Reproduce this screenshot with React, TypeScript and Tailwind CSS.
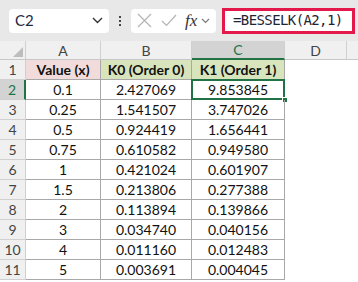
import React from "react";

const rows: [string, string, string][] = [
  ["0.1", "2.427069", "9.853845"],
  ["0.25", "1.541507", "3.747026"],
  ["0.5", "0.924419", "1.656441"],
  ["0.75", "0.610582", "0.949580"],
  ["1", "0.421024", "0.601907"],
  ["1.5", "0.213806", "0.277388"],
  ["2", "0.113894", "0.139866"],
  ["3", "0.034740", "0.040156"],
  ["4", "0.011160", "0.012483"],
  ["5", "0.003691", "0.004045"],
];

const font = { fontFamily: "Lato, 'Open Sans', sans-serif" };

export default function App() {
  return (
    <div className="w-[358px] h-[282px] overflow-hidden bg-white text-[#222]" style={font}>
      {/* toolbar */}
      <div className="h-[41px] bg-[#e8e8e8] flex items-center relative">
        <div className="ml-[9px] w-[100px] h-[24px] rounded-[4px] bg-white flex items-center justify-between pl-[6px] pr-[6px]">
          <span className="text-[15px] text-[#1f2a44]">C2</span>
          <svg width="11" height="7" viewBox="0 0 11 7"><path d="M1 1l4.5 4.5L10 1" fill="none" stroke="#333" strokeWidth="1.4" /></svg>
        </div>
        <div className="w-[22px] flex flex-col items-center gap-[2px]">
          <div className="w-[2px] h-[2px] bg-[#444]" />
          <div className="w-[2px] h-[2px] bg-[#444]" />
          <div className="w-[2px] h-[2px] bg-[#444]" />
        </div>
        <div className="w-[85px] h-[24px] rounded-[4px] bg-white flex items-center pl-[6px]">
          <svg width="15" height="15" viewBox="0 0 15 15"><path d="M1 1l13 13M14 1L1 14" stroke="#b4b4b4" strokeWidth="1.2" fill="none" /></svg>
          <svg className="ml-[9px]" width="16" height="13" viewBox="0 0 16 13"><path d="M1 7l4.5 4.5L15 1" stroke="#b4b4b4" strokeWidth="1.2" fill="none" /></svg>
          <span className="ml-[8px] text-[17px] italic text-[#333] leading-none" style={{ fontFamily: "'Liberation Serif', serif" }}>fx</span>
          <svg className="ml-[4px]" width="9" height="6" viewBox="0 0 9 6"><path d="M1 1l3.5 3.5L8 1" fill="none" stroke="#777" strokeWidth="1.1" /></svg>
        </div>
        <div className="ml-[6px] w-[133px] h-[26px] border-[3px] border-[#e3194b] bg-white flex items-center pl-[8px]">
          <span className="text-[14px] tracking-[-0.6px] text-[#1e2433]" style={{ fontFamily: "'DejaVu Sans Mono', monospace" }}>=BESSELK(A2,1)</span>
        </div>
      </div>
      {/* header row */}
      <div className="flex h-[19px] bg-[#f0f0f0] text-[14px] text-[#444]">
        <div className="w-[26px] border-r border-[#d0d0d0] border-b border-b-[#c8c8c8] relative">
          <svg className="absolute right-[2px] bottom-[2px]" width="10" height="10" viewBox="0 0 10 10"><path d="M10 0V10H0Z" fill="#bdbdbd" /></svg>
        </div>
        <div className="w-[75px] border-r border-[#d0d0d0] border-b border-b-[#c8c8c8] flex items-center justify-center">A</div>
        <div className="w-[91px] border-r border-[#d0d0d0] border-b border-b-[#c8c8c8] flex items-center justify-center">B</div>
        <div className="w-[93px] border-r border-[#d0d0d0] bg-[#d3d3d3] border-b-2 border-b-[#217346] text-[#217346] flex items-center justify-center">C</div>
        <div className="w-[62px] border-r border-[#d0d0d0] border-b border-b-[#c8c8c8] flex items-center justify-center">D</div>
        <div className="flex-1 border-b border-b-[#c8c8c8]" />
      </div>
      {/* row 1 */}
      <div className="flex h-[20px] text-[14px]">
        <div className="w-[26px] bg-[#f0f0f0] border-r border-b border-[#d0d0d0] flex items-center justify-center text-[#444]">1</div>
        <div className="w-[75px] bg-[#f2dcdb] border-r border-b border-[#a8a8a8] flex items-center justify-center font-bold text-[#111]">Value (x)</div>
        <div className="w-[91px] bg-[#d8e4bc] border-r border-b border-[#a8a8a8] flex items-center justify-center font-bold text-[#111]">K0 (Order 0)</div>
        <div className="w-[93px] bg-[#d8e4bc] border-r border-b border-[#a8a8a8] flex items-center justify-center font-bold text-[#111]">K1 (Order 1)</div>
        <div className="flex-1" />
      </div>
      {rows.map((r, i) => {
        const sel = i === 0;
        return (
          <div key={i} className="flex h-[20px] text-[14px]">
            <div
              className={
                sel
                  ? "w-[26px] bg-[#d3d3d3] border-r-2 border-r-[#217346] border-b border-b-[#d0d0d0] flex items-center justify-center text-[#217346]"
                  : "w-[26px] bg-[#f0f0f0] border-r border-b border-[#d0d0d0] flex items-center justify-center text-[#444]"
              }
            >
              {i + 2}
            </div>
            <div className="w-[75px] border-r border-b border-[#a8a8a8] flex items-center justify-center text-[#111]">{r[0]}</div>
            <div className="w-[91px] border-r border-b border-[#a8a8a8] flex items-center justify-center text-[#111]">{r[1]}</div>
            <div className="w-[93px] border-r border-b border-[#a8a8a8] flex items-center justify-center text-[#111] relative">
              {r[2]}
              {sel && (
                <>
                  <div className="absolute left-[-1px] top-[-1px] right-[-1px] bottom-[-1px] border-2 border-[#217346]" />
                  <div className="absolute right-[-4px] bottom-[-4px] w-[6px] h-[6px] bg-[#217346] border border-white" />
                </>
              )}
            </div>
            <div className="flex-1" />
          </div>
        );
      })}
    </div>
  );
}
